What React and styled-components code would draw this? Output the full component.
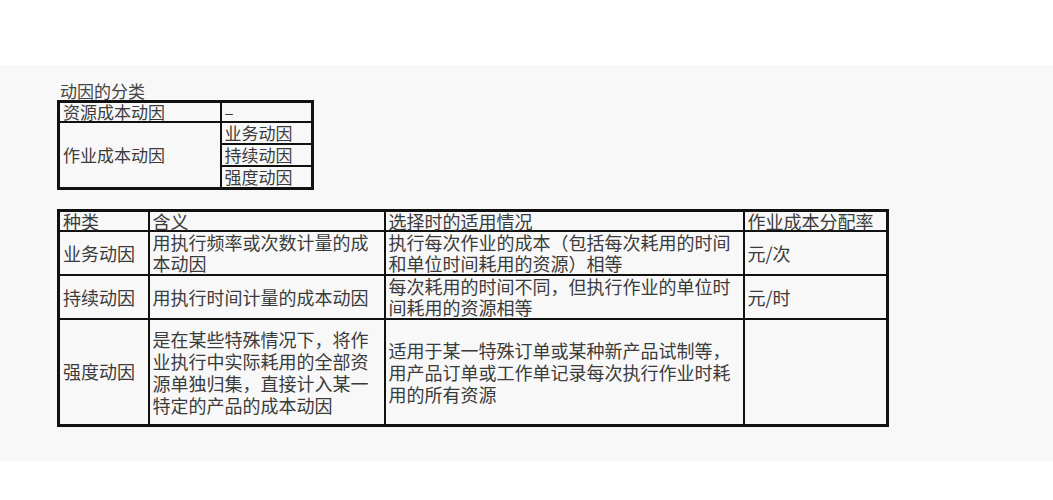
import React from "react";
import styled, { createGlobalStyle } from "styled-components";

const Global = createGlobalStyle`
  html, body { margin: 0; padding: 0; background: #ffffff; }
  body { font-family: "Noto Sans CJK SC", "Noto Sans", sans-serif; }
`;

const Panel = styled.div`
  margin-top: 65px;
  height: 396px;
  background: #f8f8f8;
  padding: 16px 0 0 57px;
  box-sizing: border-box;
`;

const Title = styled.div`
  font-size: 17px;
  line-height: 19px;
  color: #454545;
  padding-left: 3px;
`;

const Table = styled.table`
  border-collapse: collapse;
  table-layout: fixed;
  width: ${(p) => p.$w}px;
  border: 3px solid #111;
  margin-top: ${(p) => p.$mt || 0}px;
`;

const Row = styled.tr`
  height: ${(p) => p.$h}px;
`;

const Cell = styled.td`
  border: 2px solid #111;
  padding: 0 3px;
  font-size: ${(p) => p.$fs || 18}px;
  line-height: ${(p) => p.$lh || 21}px;
  color: #3b3b3b;
  vertical-align: ${(p) => p.$va || "middle"};
  white-space: nowrap;
`;

export default function App() {
  return (
    <>
      <Global />
      <Panel>
        <Title>动因的分类</Title>
        <Table $w={254}>
          <colgroup>
            <col style={{ width: 162 }} />
            <col style={{ width: 92 }} />
          </colgroup>
          <tbody>
            <Row $h={20}>
              <Cell $fs={17} $lh={18}>资源成本动因</Cell>
              <Cell $fs={17} $lh={18} $va="top">–</Cell>
            </Row>
            <Row $h={22}>
              <Cell $fs={17} $lh={18} rowSpan={3}>作业成本动因</Cell>
              <Cell $fs={17} $lh={18}>业务动因</Cell>
            </Row>
            <Row $h={22}>
              <Cell $fs={17} $lh={18}>持续动因</Cell>
            </Row>
            <Row $h={22}>
              <Cell $fs={17} $lh={18}>强度动因</Cell>
            </Row>
          </tbody>
        </Table>
        <Table $w={829} $mt={19}>
          <colgroup>
            <col style={{ width: 90 }} />
            <col style={{ width: 236 }} />
            <col style={{ width: 359 }} />
            <col style={{ width: 144 }} />
          </colgroup>
          <tbody>
            <Row $h={21}>
              <Cell $lh={18}>种类</Cell>
              <Cell $lh={18}>含义</Cell>
              <Cell $lh={18}>选择时的适用情况</Cell>
              <Cell $lh={18}>作业成本分配率</Cell>
            </Row>
            <Row $h={44}>
              <Cell>业务动因</Cell>
              <Cell>用执行频率或次数计量的成<br />本动因</Cell>
              <Cell>执行每次作业的成本（包括每次耗用的时间<br />和单位时间耗用的资源）相等</Cell>
              <Cell>元/次</Cell>
            </Row>
            <Row $h={43}>
              <Cell>持续动因</Cell>
              <Cell>用执行时间计量的成本动因</Cell>
              <Cell>每次耗用的时间不同，但执行作业的单位时<br />间耗用的资源相等</Cell>
              <Cell>元/时</Cell>
            </Row>
            <Row $h={106}>
              <Cell>强度动因</Cell>
              <Cell $lh={22}>是在某些特殊情况下，将作<br />业执行中实际耗用的全部资<br />源单独归集，直接计入某一<br />特定的产品的成本动因</Cell>
              <Cell $lh={22}>适用于某一特殊订单或某种新产品试制等，<br />用产品订单或工作单记录每次执行作业时耗<br />用的所有资源</Cell>
              <Cell></Cell>
            </Row>
          </tbody>
        </Table>
      </Panel>
    </>
  );
}
